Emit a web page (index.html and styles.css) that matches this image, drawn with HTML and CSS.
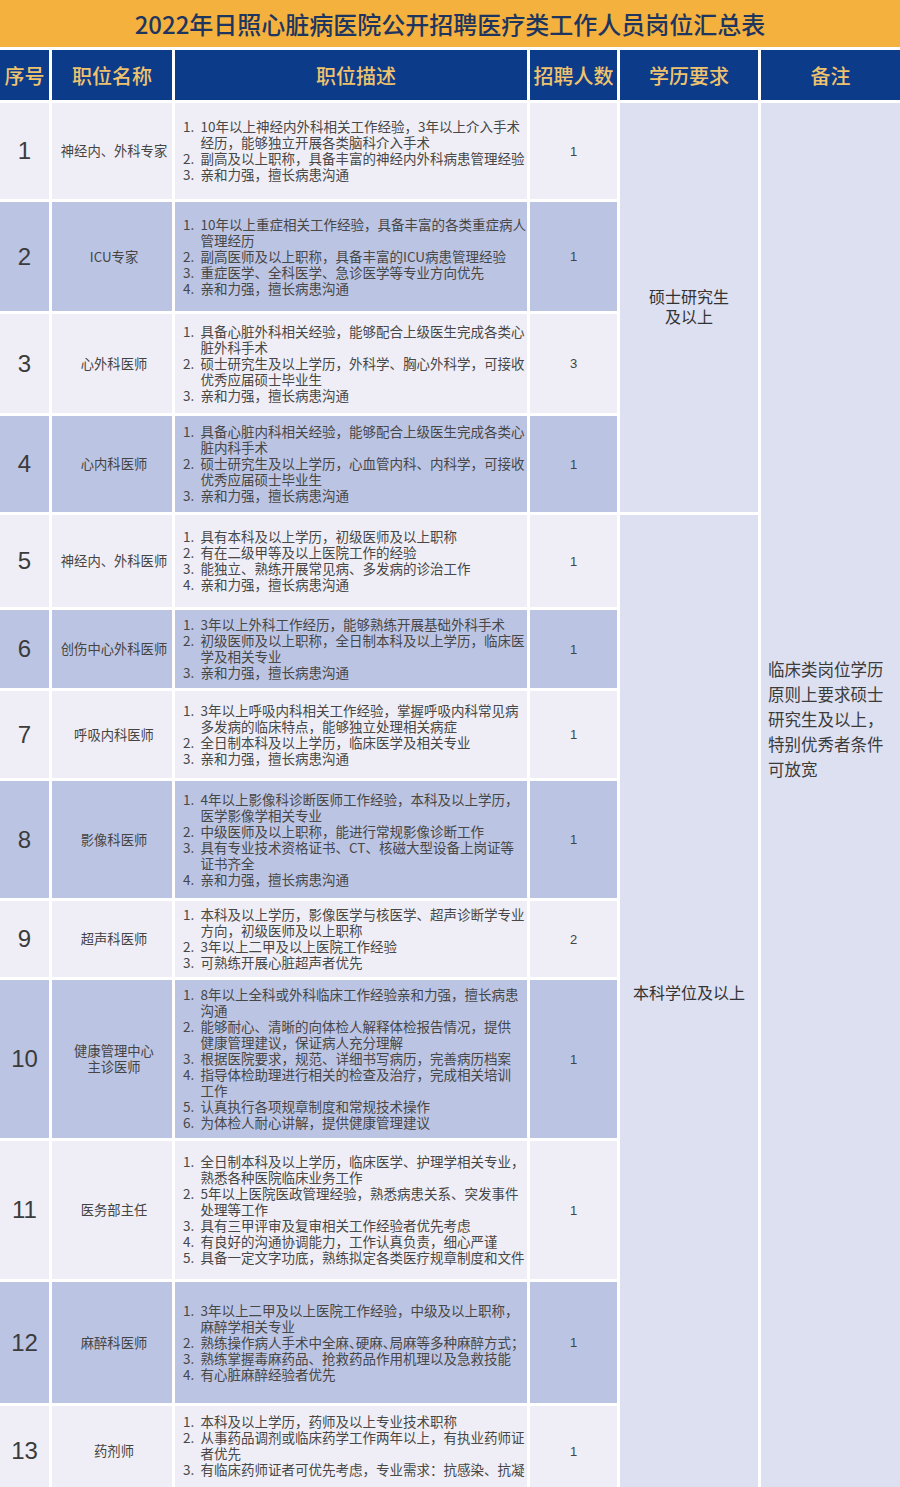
FILE: index.html
```html
<!DOCTYPE html>
<html lang="zh-CN">
<head>
<meta charset="utf-8">
<title>2022年日照心脏病医院公开招聘医疗类工作人员岗位汇总表</title>
<link rel="stylesheet" href="styles.css">
</head>
<body>
<div class="sheet">
  <div class="title">2022年日照心脏病医院公开招聘医疗类工作人员岗位汇总表</div>

  <div class="th">序号</div>
  <div class="th">职位名称</div>
  <div class="th th-desc">职位描述</div>
  <div class="th">招聘人数</div>
  <div class="th">学历要求</div>
  <div class="th">备注</div>

  <div class="edu edu-a">硕士研究生<br>及以上</div>
  <div class="edu edu-b">本科学位及以上</div>
  <div class="remark">临床类岗位学历<br>原则上要求硕士<br>研究生及以上，<br>特别优秀者条件<br>可放宽</div>

  <!-- 1 -->
  <div class="c num lt">1</div>
  <div class="c name lt">神经内、外科专家</div>
  <div class="c desc lt">
    <div class="it"><span class="n">1.</span><span class="t">10年以上神经内外科相关工作经验，3年以上介入手术<br>经历，能够独立开展各类脑科介入手术</span></div>
    <div class="it"><span class="n">2.</span><span class="t">副高及以上职称，具备丰富的神经内外科病患管理经验</span></div>
    <div class="it"><span class="n">3.</span><span class="t">亲和力强，擅长病患沟通</span></div>
  </div>
  <div class="c cnt lt">1</div>

  <!-- 2 -->
  <div class="c num dk">2</div>
  <div class="c name dk">ICU专家</div>
  <div class="c desc dk">
    <div class="it"><span class="n">1.</span><span class="t">10年以上重症相关工作经验，具备丰富的各类重症病人<br>管理经历</span></div>
    <div class="it"><span class="n">2.</span><span class="t">副高医师及以上职称，具备丰富的ICU病患管理经验</span></div>
    <div class="it"><span class="n">3.</span><span class="t">重症医学、全科医学、急诊医学等专业方向优先</span></div>
    <div class="it"><span class="n">4.</span><span class="t">亲和力强，擅长病患沟通</span></div>
  </div>
  <div class="c cnt dk">1</div>

  <!-- 3 -->
  <div class="c num lt">3</div>
  <div class="c name lt">心外科医师</div>
  <div class="c desc lt">
    <div class="it"><span class="n">1.</span><span class="t">具备心脏外科相关经验，能够配合上级医生完成各类心<br>脏外科手术</span></div>
    <div class="it"><span class="n">2.</span><span class="t">硕士研究生及以上学历，外科学、胸心外科学，可接收<br>优秀应届硕士毕业生</span></div>
    <div class="it"><span class="n">3.</span><span class="t">亲和力强，擅长病患沟通</span></div>
  </div>
  <div class="c cnt lt">3</div>

  <!-- 4 -->
  <div class="c num dk">4</div>
  <div class="c name dk">心内科医师</div>
  <div class="c desc dk">
    <div class="it"><span class="n">1.</span><span class="t">具备心脏内科相关经验，能够配合上级医生完成各类心<br>脏内科手术</span></div>
    <div class="it"><span class="n">2.</span><span class="t">硕士研究生及以上学历，心血管内科、内科学，可接收<br>优秀应届硕士毕业生</span></div>
    <div class="it"><span class="n">3.</span><span class="t">亲和力强，擅长病患沟通</span></div>
  </div>
  <div class="c cnt dk">1</div>

  <!-- 5 -->
  <div class="c num lt">5</div>
  <div class="c name lt">神经内、外科医师</div>
  <div class="c desc lt">
    <div class="it"><span class="n">1.</span><span class="t">具有本科及以上学历，初级医师及以上职称</span></div>
    <div class="it"><span class="n">2.</span><span class="t">有在二级甲等及以上医院工作的经验</span></div>
    <div class="it"><span class="n">3.</span><span class="t">能独立、熟练开展常见病、多发病的诊治工作</span></div>
    <div class="it"><span class="n">4.</span><span class="t">亲和力强，擅长病患沟通</span></div>
  </div>
  <div class="c cnt lt">1</div>

  <!-- 6 -->
  <div class="c num dk">6</div>
  <div class="c name dk">创伤中心外科医师</div>
  <div class="c desc dk">
    <div class="it"><span class="n">1.</span><span class="t">3年以上外科工作经历，能够熟练开展基础外科手术</span></div>
    <div class="it"><span class="n">2.</span><span class="t">初级医师及以上职称，全日制本科及以上学历，临床医<br>学及相关专业</span></div>
    <div class="it"><span class="n">3.</span><span class="t">亲和力强，擅长病患沟通</span></div>
  </div>
  <div class="c cnt dk">1</div>

  <!-- 7 -->
  <div class="c num lt">7</div>
  <div class="c name lt">呼吸内科医师</div>
  <div class="c desc lt">
    <div class="it"><span class="n">1.</span><span class="t">3年以上呼吸内科相关工作经验，掌握呼吸内科常见病<br>多发病的临床特点，能够独立处理相关病症</span></div>
    <div class="it"><span class="n">2.</span><span class="t">全日制本科及以上学历，临床医学及相关专业</span></div>
    <div class="it"><span class="n">3.</span><span class="t">亲和力强，擅长病患沟通</span></div>
  </div>
  <div class="c cnt lt">1</div>

  <!-- 8 -->
  <div class="c num dk">8</div>
  <div class="c name dk">影像科医师</div>
  <div class="c desc dk">
    <div class="it"><span class="n">1.</span><span class="t">4年以上影像科诊断医师工作经验，本科及以上学历，<br>医学影像学相关专业</span></div>
    <div class="it"><span class="n">2.</span><span class="t">中级医师及以上职称，能进行常规影像诊断工作</span></div>
    <div class="it"><span class="n">3.</span><span class="t">具有专业技术资格证书、CT、核磁大型设备上岗证等<br>证书齐全</span></div>
    <div class="it"><span class="n">4.</span><span class="t">亲和力强，擅长病患沟通</span></div>
  </div>
  <div class="c cnt dk">1</div>

  <!-- 9 -->
  <div class="c num lt">9</div>
  <div class="c name lt">超声科医师</div>
  <div class="c desc lt">
    <div class="it"><span class="n">1.</span><span class="t">本科及以上学历，影像医学与核医学、超声诊断学专业<br>方向，初级医师及以上职称</span></div>
    <div class="it"><span class="n">2.</span><span class="t">3年以上二甲及以上医院工作经验</span></div>
    <div class="it"><span class="n">3.</span><span class="t">可熟练开展心脏超声者优先</span></div>
  </div>
  <div class="c cnt lt">2</div>

  <!-- 10 -->
  <div class="c num dk">10</div>
  <div class="c name dk">健康管理中心<br>主诊医师</div>
  <div class="c desc dk">
    <div class="it"><span class="n">1.</span><span class="t">8年以上全科或外科临床工作经验亲和力强，擅长病患<br>沟通</span></div>
    <div class="it"><span class="n">2.</span><span class="t">能够耐心、清晰的向体检人解释体检报告情况，提供<br>健康管理建议，保证病人充分理解</span></div>
    <div class="it"><span class="n">3.</span><span class="t">根据医院要求，规范、详细书写病历，完善病历档案</span></div>
    <div class="it"><span class="n">4.</span><span class="t">指导体检助理进行相关的检查及治疗，完成相关培训<br>工作</span></div>
    <div class="it"><span class="n">5.</span><span class="t">认真执行各项规章制度和常规技术操作</span></div>
    <div class="it"><span class="n">6.</span><span class="t">为体检人耐心讲解，提供健康管理建议</span></div>
  </div>
  <div class="c cnt dk">1</div>

  <!-- 11 -->
  <div class="c num lt">11</div>
  <div class="c name lt">医务部主任</div>
  <div class="c desc lt">
    <div class="it"><span class="n">1.</span><span class="t">全日制本科及以上学历，临床医学、护理学相关专业，<br>熟悉各种医院临床业务工作</span></div>
    <div class="it"><span class="n">2.</span><span class="t">5年以上医院医政管理经验，熟悉病患关系、突发事件<br>处理等工作</span></div>
    <div class="it"><span class="n">3.</span><span class="t">具有三甲评审及复审相关工作经验者优先考虑</span></div>
    <div class="it"><span class="n">4.</span><span class="t">有良好的沟通协调能力，工作认真负责，细心严谨</span></div>
    <div class="it"><span class="n">5.</span><span class="t">具备一定文字功底，熟练拟定各类医疗规章制度和文件</span></div>
  </div>
  <div class="c cnt lt">1</div>

  <!-- 12 -->
  <div class="c num dk">12</div>
  <div class="c name dk">麻醉科医师</div>
  <div class="c desc dk">
    <div class="it"><span class="n">1.</span><span class="t">3年以上二甲及以上医院工作经验，中级及以上职称，<br>麻醉学相关专业</span></div>
    <div class="it"><span class="n">2.</span><span class="t tight">熟练操作病人手术中全麻、硬麻、局麻等多种麻醉方式；</span></div>
    <div class="it"><span class="n">3.</span><span class="t">熟练掌握毒麻药品、抢救药品作用机理以及急救技能</span></div>
    <div class="it"><span class="n">4.</span><span class="t">有心脏麻醉经验者优先</span></div>
  </div>
  <div class="c cnt dk">1</div>

  <!-- 13 -->
  <div class="c num lt">13</div>
  <div class="c name lt">药剂师</div>
  <div class="c desc lt top">
    <div class="it"><span class="n">1.</span><span class="t">本科及以上学历，药师及以上专业技术职称</span></div>
    <div class="it"><span class="n">2.</span><span class="t">从事药品调剂或临床药学工作两年以上，有执业药师证<br>者优先</span></div>
    <div class="it"><span class="n">3.</span><span class="t">有临床药师证者可优先考虑，专业需求：抗感染、抗凝</span></div>
  </div>
  <div class="c cnt lt">1</div>
</div>
</body>
</html>
```

FILE: styles.css
```css
* { box-sizing: border-box; }

html, body {
  margin: 0;
  padding: 0;
  background: #ffffff;
}

body {
  font-family: "Noto Sans CJK SC", "Noto Sans", sans-serif;
  color: #444444;
}

.sheet {
  display: grid;
  grid-template-columns: 49px 120px 352px 87px 138px 139px;
  grid-template-rows: 47px 50px 96px 109px 99px 96px 92px 78px 87px 117px 76px 158px 138px 121px 90px;
  column-gap: 3px;
  row-gap: 3px;
  width: 900px;
  background: #ffffff;
}

.title {
  grid-column: 1 / -1;
  background: #f4b13e;
  color: #1e365f;
  font-size: 24px;
  font-weight: 500;
  display: flex;
  align-items: center;
  justify-content: center;
  padding-bottom: 1px;
  white-space: nowrap;
}

.th {
  background: #0c3b89;
  color: #efc36e;
  font-size: 20px;
  font-weight: 500;
  display: flex;
  align-items: center;
  justify-content: center;
  white-space: nowrap;
}

.th-desc {
  padding-left: 10px;
}

.c {
  display: flex;
  align-items: center;
  justify-content: center;
}

.lt { background: #efeef6; }
.dk { background: #bcc4e3; }

.num {
  font-family: "Liberation Sans", "Noto Sans", sans-serif;
  font-size: 24px;
  color: #3b3b3b;
}

.name {
  font-size: 13.3px;
  line-height: 16px;
  text-align: center;
  color: #444444;
  padding-left: 4px;
}

.cnt {
  font-family: "Liberation Sans", "Noto Sans", sans-serif;
  font-size: 13px;
  color: #444444;
}

.desc {
  flex-direction: column;
  align-items: stretch;
  justify-content: center;
  padding: 0 2px 2px 8px;
  font-size: 13.5px;
  line-height: 16px;
  color: #474747;
  white-space: nowrap;
}

.desc.top {
  justify-content: flex-start;
  padding-top: 7px;
}

.it {
  display: flex;
}

.n {
  flex: 0 0 17.5px;
}

.t {
  flex: 1 1 auto;
}

.tight {
  font-feature-settings: "halt" 1;
}

.edu {
  grid-column: 5;
  background: #dde0f1;
  display: flex;
  align-items: center;
  justify-content: center;
  text-align: center;
  font-size: 16px;
  line-height: 20px;
  color: #333333;
}

.edu-a { grid-row: 3 / span 4; padding-bottom: 3px; }
.edu-b { grid-row: 7 / span 9; padding-bottom: 27px; }

.remark {
  grid-column: 6;
  grid-row: 3 / span 13;
  background: #dde0f1;
  display: flex;
  align-items: center;
  padding: 0 0 161px 7px;
  font-size: 16.5px;
  line-height: 25px;
  color: #3b3b3b;
  white-space: nowrap;
}
```
